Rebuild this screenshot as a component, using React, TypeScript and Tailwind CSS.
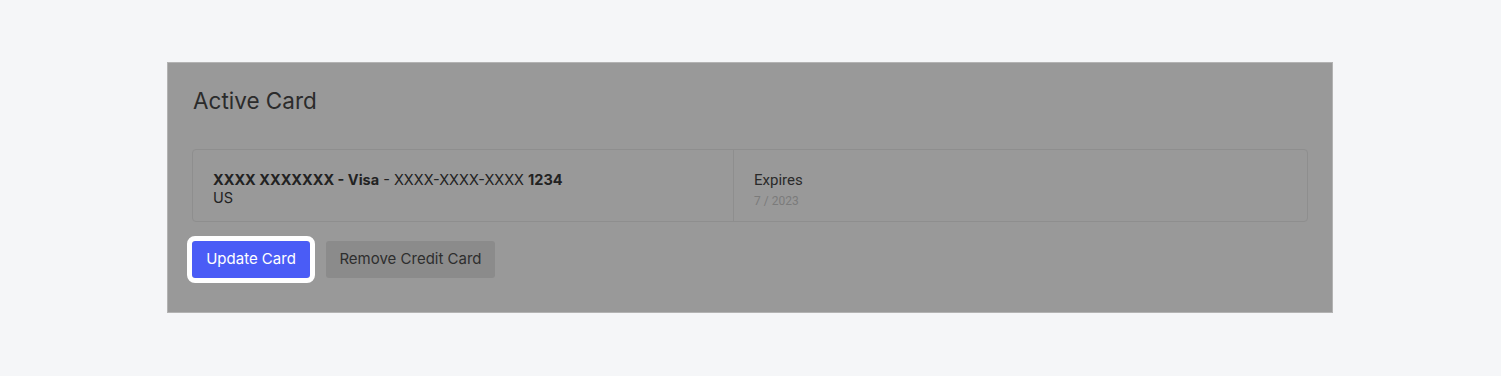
export default function App() {
  return (
    <div className="min-h-[376px] w-full bg-[#f5f6f8] pt-[62px] pl-[167px] pr-[168px] font-['Inter',sans-serif]">
      <div className="w-[1166px] h-[251px] bg-[#999999] border border-[#b3b3b3] pt-[22px] pl-[24px] pr-[24px]">
        {/* Header */}
        <h2 className="pl-px text-[22.5px] leading-8 text-[#2b2b2b]">Active Card</h2>

        {/* Card row */}
        <div className="mt-[32px] flex h-[73px] rounded-[4px] border border-[#8e8e8e]">
          <div className="w-[541px] border-r border-[#8e8e8e] px-5 pt-[21px] text-[14.5px] leading-[18px] text-[#222]">
            <p>
              <span className="font-bold">XXXX XXXXXXX - Visa</span> - XXXX-XXXX-XXXX{" "}
              <span className="font-bold">1234</span>
            </p>
            <p>US</p>
          </div>
          <div className="flex-1 px-5 pt-[21px] font-['Roboto',sans-serif]">
            <p className="text-[15px] leading-[18px] text-[#2a2a2a]">Expires</p>
            <p className="mt-[4px] text-xs leading-4 text-[#7b7b7b]">7 / 2023</p>
          </div>
        </div>

        {/* Actions */}
        <div className="mt-[19px] flex items-center gap-4">
          <button className="h-[37px] w-[118px] rounded-[3px] bg-[#4a5cf6] text-[15px] text-white outline-[5px] outline-solid outline-white">
            Update Card
          </button>
          <button className="h-[37px] w-[169px] rounded-[3px] bg-[#8b8b8b] text-[15px] text-[#2e2e2e]">
            Remove Credit Card
          </button>
        </div>
      </div>
    </div>
  );
}
